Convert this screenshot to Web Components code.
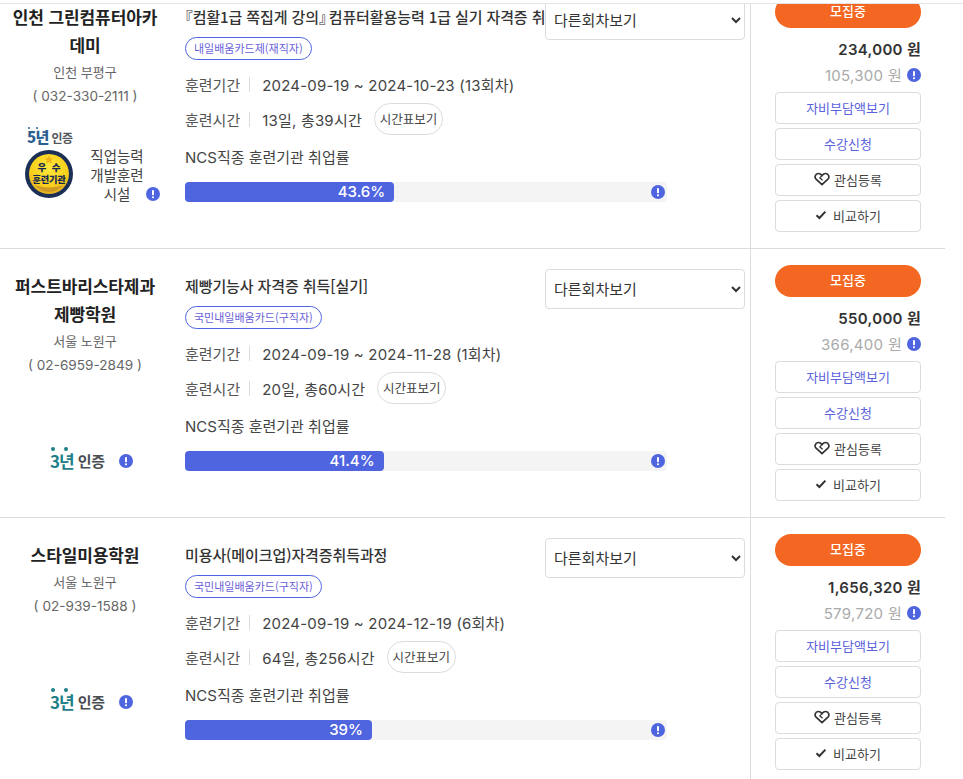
<!DOCTYPE html>
<html lang="ko">
<head>
<meta charset="utf-8">
<title>훈련과정 목록</title>
<style>
  html, body { margin: 0; padding: 0; background: #fff; }
  body { font-family: Inter, "Noto Sans CJK KR", sans-serif; color: #333; }
</style>
</head>
<body>

<course-list>
  <course-row cert-gap="20"
    region="인천 부평구" phone="( 032-330-2111 )"
    title="『컴활1급 쪽집게 강의』 컴퓨터활용능력 1급 실기 자격증 취"
    tag="내일배움카드제(재직자)"
    period="2024-09-19 ~ 2024-10-23 (13회차)" hours="13일, 총39시간"
    rate="43.6" price="234,000 원" self-price="105,300 원">
    <span slot="name">인천 그린컴퓨터아카<br>데미</span>
    <medal-badge slot="cert"></medal-badge>
  </course-row>
  <course-row
    region="서울 노원구" phone="( 02-6959-2849 )"
    title="제빵기능사 자격증 취득[실기]"
    tag="국민내일배움카드(구직자)"
    period="2024-09-19 ~ 2024-11-28 (1회차)" hours="20일, 총60시간"
    rate="41.4" price="550,000 원" self-price="366,400 원">
    <span slot="name">퍼스트바리스타제과<br>제빵학원</span>
    <cert-badge slot="cert" years="3"></cert-badge>
  </course-row>
  <course-row
    region="서울 노원구" phone="( 02-939-1588 )"
    title="미용사(메이크업)자격증취득과정"
    tag="국민내일배움카드(구직자)"
    period="2024-09-19 ~ 2024-12-19 (6회차)" hours="64일, 총256시간"
    rate="39" price="1,656,320 원" self-price="579,720 원">
    <span slot="name">스타일미용학원</span>
    <cert-badge slot="cert" years="3"></cert-badge>
  </course-row>
</course-list>

<script>
class InfoDot extends HTMLElement {
  constructor() {
    super();
    this.attachShadow({ mode: 'open' });
    this.shadowRoot.innerHTML = `
      <style>
        :host { display: inline-flex; width: 14px; height: 14px; flex: none; }
        svg { display: block; }
      </style>
      <svg width="14" height="14" viewBox="0 0 14 14">
        <circle cx="7" cy="7" r="7" fill="#4f65e0"/>
        <rect x="6" y="3" width="2" height="5.2" rx=".8" fill="#fff"/>
        <rect x="6" y="9.2" width="2" height="2" rx=".8" fill="#fff"/>
      </svg>`;
  }
}
customElements.define('info-dot', InfoDot);

class CertBadge extends HTMLElement {
  constructor() {
    super();
    this.attachShadow({ mode: 'open' });
    const years = this.getAttribute('years') || '3';
    this.shadowRoot.innerHTML = `
      <style>
        :host { display: flex; align-items: center; justify-content: flex-start; padding-left: 50px; height: 24px; }
        .year { position: relative; font: 700 17px/24px "Noto Sans CJK KR", sans-serif; color: #1f8088; letter-spacing: -1px; }
        .year::before, .year::after { content: ""; position: absolute; top: -2px; width: 4px; height: 4px; border-radius: 50%; background: #1f8088; }
        .year::before { left: 1px; }
        .year::after { left: 14px; }
        .word { font: 700 15px/24px "Noto Sans CJK KR", sans-serif; color: #4a4d52; margin-left: 4px; letter-spacing: -.3px; }
        info-dot { margin-left: 14px; }
      </style>
      <span class="year">${years}년</span><span class="word">인증</span><info-dot></info-dot>`;
  }
}
customElements.define('cert-badge', CertBadge);

class MedalBadge extends HTMLElement {
  constructor() {
    super();
    this.attachShadow({ mode: 'open' });
    this.shadowRoot.innerHTML = `
      <style>
        :host { display: grid; grid-template-columns: 48px 1fr; column-gap: 15px; padding-left: 25px; }
        .years { grid-column: 1; font: 700 12px/18px "Noto Sans CJK KR", sans-serif; color: #55585c; white-space: nowrap; letter-spacing: -.6px; margin-left: 2px; position: relative; }
        .years b { position: relative; color: #2a5f8f; font-size: 15px; }
        .years b::before { content: ""; position: absolute; left: 1px; top: 1px; width: 2px; height: 2px; background: #2a5f8f; border-radius: 50%; box-shadow: 8px 0 #2a5f8f; }
        svg { grid-column: 1; display: block; margin-top: 3px; }
        .label { grid-column: 2; grid-row: 1 / span 2; align-self: end; display: flex; align-items: flex-end; margin-bottom: -5px; }
        .text { width: 58px; font: 400 14.5px/19px "Noto Sans CJK KR", sans-serif; color: #444; text-align: center; }
        info-dot { margin: 0 0 2px 0; }
      </style>
      <div class="years"><b>5년</b> 인증</div>
      <svg width="48" height="48" viewBox="0 0 48 48">
        <defs>
          <radialGradient id="g" cx="50%" cy="35%" r="70%">
            <stop offset="0" stop-color="#ffe93c"/>
            <stop offset=".65" stop-color="#f9cf1c"/>
            <stop offset="1" stop-color="#d9a526"/>
          </radialGradient>
        </defs>
        <circle cx="24" cy="24" r="24" fill="#1b2f56"/>
        <circle cx="24" cy="24" r="20" fill="url(#g)"/>
        <path d="M24 5.500l1.300 2.700 3 .3-2.200 2 .6 2.900-2.700-1.400-2.700 1.400.6-2.900-2.200-2 3-.3z" fill="#eeb118"/>
        <path d="M10 35c3 4 8 7 14 7s11-3 14-7c-3 1.600-8 2.500-14 2.500s-11-.9-14-2.500z" fill="#cf9a24"/>
        <text x="24" y="21" text-anchor="middle" font-family="Noto Sans CJK KR" font-weight="900" font-size="9.5" word-spacing="3" fill="#14274e">우 수</text>
        <text x="24" y="33" text-anchor="middle" font-family="Noto Sans CJK KR" font-weight="900" font-size="9.2" letter-spacing="-.2" fill="#14274e">훈련기관</text>
      </svg>
      <div class="label"><div class="text">직업능력 개발훈련 시설</div><info-dot></info-dot></div>`;
  }
}
customElements.define('medal-badge', MedalBadge);

class SideButton extends HTMLElement {
  constructor() {
    super();
    this.attachShadow({ mode: 'open' });
    this.shadowRoot.innerHTML = `
      <style>
        :host { display: flex; align-items: center; justify-content: center; gap: 4px; box-sizing: border-box; height: 32px; padding-bottom: 2px; border: 1px solid #dcdcdc; border-radius: 4px; font: 400 13px/1 "Noto Sans CJK KR", sans-serif; color: #444; background: #fff; }
        :host([accent]) { color: #5a62dc; }
      </style>
      <slot></slot>`;
  }
}
customElements.define('side-button', SideButton);

class ProgressBar extends HTMLElement {
  constructor() {
    super();
    this.attachShadow({ mode: 'open' });
    const rate = this.getAttribute('rate');
    this.shadowRoot.innerHTML = `
      <style>
        :host { display: flex; align-items: center; position: relative; width: 482px; height: 20px; background: #f4f4f4; border-radius: 4px; }
        .fill { box-sizing: border-box; height: 20px; width: calc(${rate}% - 1px); background: #4f65e0; border-radius: 4px; color: #fff; font: 500 15px/20px Inter, sans-serif; text-align: right; padding-right: 9px; }
        info-dot { position: absolute; right: 2px; top: 3px; }
      </style>
      <div class="fill">${rate}%</div><info-dot></info-dot>`;
  }
}
customElements.define('progress-bar', ProgressBar);

class CourseRow extends HTMLElement {
  constructor() {
    super();
    this.attachShadow({ mode: 'open' });
    const a = n => this.getAttribute(n) || '';
    const title = a('title').replace('『', '<i class="open">『</i>').replace('』', '<i class="close">』</i>');
    this.shadowRoot.innerHTML = `
      <style>
        :host { display: grid; grid-template-columns: 170px 581px 1fr; height: 269px; box-sizing: border-box; border-bottom: 1px solid #dcdcdc; width: 945px; font-family: Inter, "Noto Sans CJK KR", sans-serif; }
        .org { padding-top: 23px; text-align: center; display: flex; flex-direction: column; }
        .name { font: 700 17px/28px "Noto Sans CJK KR", sans-serif; color: #222; min-height: 28px; letter-spacing: -.1px; }
        .meta { font-size: 13px; line-height: 24px; color: #666; margin-top: 1px; }
        .meta + .meta { margin-top: 0; font-size: 13.6px; }
        .cert { margin-top: ${a('cert-gap') || 72}px; text-align: left; }
        .main { box-sizing: border-box; border-right: 1px solid #dcdcdc; padding: 20px 5px 0 15px; position: relative; }
        .title { box-sizing: border-box; width: 360px; height: 28px; margin-top: 3px; font: 500 15px/28px "Noto Sans CJK KR", sans-serif; color: #333; white-space: nowrap; overflow: hidden; letter-spacing: -.1px; }
        .title i { font-style: normal; }
        .title .open { margin-left: -.48em; }
        .title .close { margin-right: -.62em; }
        select { position: absolute; top: 20px; right: 5px; width: 200px; height: 40px; box-sizing: border-box; padding: 0 0 2px 4px; background: #fff; border: 1px solid #dcdcdc; border-radius: 4px; font: 400 15px "Noto Sans CJK KR", sans-serif; color: #333; }
        .tag { display: inline-block; box-sizing: border-box; height: 23px; margin-top: 6px; padding: 0 8px; border: 1px solid #4f65e0; border-radius: 12px; font: 400 11px/20px "Noto Sans CJK KR", sans-serif; color: #6a5fd8; vertical-align: top; }
        .line { display: flex; align-items: center; height: 34px; font-size: 15px; letter-spacing: .2px; color: #444; }
        .line.first { margin: 7px 0 1px; }
        .line .key { font-family: "Noto Sans CJK KR", sans-serif; color: #555; letter-spacing: 0; padding-right: 9px; border-right: 1px solid #dcdcdc; line-height: 15px; margin-right: 12px; }
        .pill { margin-left: 12px; box-sizing: border-box; width: 69px; height: 32px; border: 1px solid #dcdcdc; border-radius: 16px; font: 400 12.5px/30px "Noto Sans CJK KR", sans-serif; letter-spacing: 0; color: #444; text-align: center; }
        .ncs { font-size: 15px; line-height: 28px; margin-top: 8px; color: #444; }
        progress-bar { margin-top: 10px; }
        .side { padding: 16px 0 0 24px; width: 146px; display: flex; flex-direction: column; }
        .status { height: 32px; border-radius: 16px; background: #f46722; color: #fff; font: 500 13px/29px "Noto Sans CJK KR", sans-serif; text-align: center; }
        .price { margin-top: 9px; font-size: 15px; font-weight: 600; line-height: 26px; color: #333; text-align: right; letter-spacing: .3px; }
        .self { display: flex; justify-content: flex-end; align-items: center; gap: 5px; font-size: 15px; line-height: 26px; color: #aaa; margin-bottom: 3px; letter-spacing: .3px; }
        .self info-dot { margin-top: -2px; }
        .btns { display: flex; flex-direction: column; gap: 4px; }
        .tick { margin-right: 2px; }
      </style>
      <section class="org">
        <div class="name"><slot name="name"></slot></div>
        <div class="meta">${a('region')}</div>
        <div class="meta">${a('phone')}</div>
        <div class="cert"><slot name="cert"></slot></div>
      </section>
      <section class="main">
        <div class="title">${title}</div>
        <select><option>다른회차보기</option></select>
        <span class="tag">${a('tag')}</span>
        <div class="line first"><span class="key">훈련기간</span><span>${a('period')}</span></div>
        <div class="line"><span class="key">훈련시간</span><span>${a('hours')}</span><span class="pill">시간표보기</span></div>
        <div class="ncs">NCS직종 훈련기관 취업률</div>
        <progress-bar rate="${a('rate')}"></progress-bar>
      </section>
      <section class="side">
        <div class="status">모집중</div>
        <div class="price">${a('price')}</div>
        <div class="self"><span>${a('self-price')}</span><info-dot></info-dot></div>
        <div class="btns">
          <side-button accent>자비부담액보기</side-button>
          <side-button accent>수강신청</side-button>
          <side-button>
            <svg width="16" height="14" viewBox="0 0 16 14"><path d="M8 12.700 2.100 7.200C.2 5.300 1.200 1.700 4.200 1.500 5.800 1.400 7 2.300 8 3.600 9 2.300 10.200 1.400 11.800 1.500 14.800 1.700 15.800 5.300 13.900 7.200Z" fill="none" stroke="#333" stroke-width="1.700" stroke-linejoin="round"/><path d="M8 3.600 5.900 5.900 8.600 8.300" fill="none" stroke="#333" stroke-width="1.300"/></svg>
            관심등록
          </side-button>
          <side-button>
            <svg class="tick" width="12" height="10" viewBox="0 0 12 10"><path d="M1.500 5.200 4.400 8l6-6.400" fill="none" stroke="#333" stroke-width="2"/></svg>
            비교하기
          </side-button>
        </div>
      </section>`;
  }
}
customElements.define('course-row', CourseRow);

class CourseList extends HTMLElement {
  constructor() {
    super();
    this.attachShadow({ mode: 'open' });
    this.shadowRoot.innerHTML = `
      <style>
        :host { display: block; position: relative; height: 779px; overflow: hidden; }
        .scroll { margin-top: -20px; }
        .edge { position: absolute; left: 0; right: 0; top: 0; height: 3px; background: #fff; border-bottom: 1px solid #e4e4e4; }
      </style>
      <div class="scroll"><slot></slot></div>
      <div class="edge"></div>`;
  }
}
customElements.define('course-list', CourseList);
</script>
</body>
</html>
